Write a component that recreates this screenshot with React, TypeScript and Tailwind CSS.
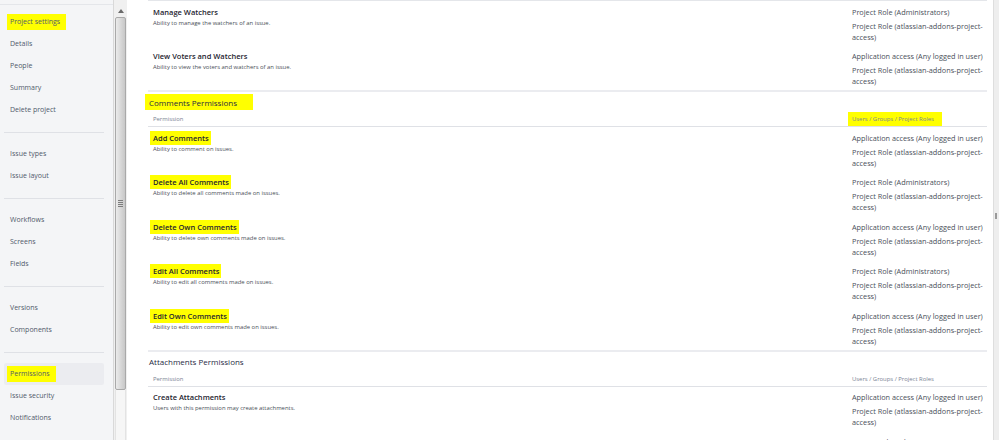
import React from "react";

const ADMIN = "Project Role (Administrators)";
const ANY = "Application access (Any logged in user)";

type RowData = { title: string; desc: string; first: string; hl?: boolean };

const watchers: RowData[] = [
  { title: "Manage Watchers", desc: "Ability to manage the watchers of an issue.", first: ADMIN },
  { title: "View Voters and Watchers", desc: "Ability to view the voters and watchers of an issue.", first: ANY },
];

const comments: RowData[] = [
  { title: "Add Comments", desc: "Ability to comment on issues.", first: ANY, hl: true },
  { title: "Delete All Comments", desc: "Ability to delete all comments made on issues.", first: ADMIN, hl: true },
  { title: "Delete Own Comments", desc: "Ability to delete own comments made on issues.", first: ANY, hl: true },
  { title: "Edit All Comments", desc: "Ability to edit all comments made on issues.", first: ADMIN, hl: true },
  { title: "Edit Own Comments", desc: "Ability to edit own comments made on issues.", first: ANY, hl: true },
];

const attachments: RowData[] = [
  { title: "Create Attachments", desc: "Users with this permission may create attachments.", first: ANY },
  { title: "Delete All Attachments", desc: "Users with this permission may delete all attachments.", first: ADMIN },
];

function Row({ r }: { r: RowData }) {
  return (
    <div className="flex h-[44.5px] pt-[5.5px]">
      <div className="flex-1 pl-[5px]">
        <div className="text-[7.5px] leading-[11px] font-semibold text-[#1e2430] whitespace-nowrap">
          {r.hl ? (
            <span className="bg-[#ffff00] py-[2px] pl-[3px] pr-[2px] -ml-[3px]">{r.title}</span>
          ) : (
            r.title
          )}
        </div>
        <div className="text-[5.9px] leading-[11px] text-[#4a4f58] whitespace-nowrap">{r.desc}</div>
      </div>
      <div className="w-[139px] pl-[4px] flex flex-col gap-[3px] text-[7.3px] leading-[11px] text-[#4a4f5a] whitespace-nowrap">
        <div>{r.first}</div>
        <div>
          Project Role (atlassian-addons-project-
          <br />
          access)
        </div>
      </div>
    </div>
  );
}

function SectionHead({ title, hl }: { title: string; hl?: boolean }) {
  return (
    <div className="border-t-2 border-[#ebecf0]">
      <div className="pt-[4px] pl-[1px] text-[8px] leading-[12px] font-medium text-[#1f2a44] whitespace-nowrap">
        {hl ? (
          <span className="bg-[#ffff00] py-[2.5px] pl-[4px] pr-[16px] -ml-[4px]">{title}</span>
        ) : (
          title
        )}
      </div>
      <div className="flex pt-[7px] pb-[3px] border-b border-[#dfe1e6] text-[5.9px] leading-[8px] text-[#7a8394]">
        <div className="flex-1 pl-[5px]">Permission</div>
        <div className="w-[139px] pl-[4px] whitespace-nowrap">
          {hl ? (
            <span className="bg-[#ffff00] py-[3px] pl-[4px] pr-[8px] -ml-[4px]">Users / Groups / Project Roles</span>
          ) : (
            "Users / Groups / Project Roles"
          )}
        </div>
      </div>
    </div>
  );
}

const groups: { label: string; hl?: boolean; active?: boolean }[][] = [
  [{ label: "Project settings", hl: true }, { label: "Details" }, { label: "People" }, { label: "Summary" }, { label: "Delete project" }],
  [{ label: "Issue types" }, { label: "Issue layout" }],
  [{ label: "Workflows" }, { label: "Screens" }, { label: "Fields" }],
  [{ label: "Versions" }, { label: "Components" }],
  [{ label: "Permissions", hl: true, active: true }, { label: "Issue security" }, { label: "Notifications" }],
];

function Sidebar() {
  return (
    <div className="w-[113px] h-full bg-[#f4f5f7] shrink-0">
      <div className="h-[4px]" />
      <div className="h-px bg-[#e4e6ea]" />
      <div className="h-[6px]" />
      <div className="pl-[4px] pr-[9px]">
        {groups.map((g, gi) => (
          <div key={gi}>
            {gi > 0 && (
              <div className="h-[22px] flex items-center">
                <div className="h-px w-full bg-[#dfe1e6]" />
              </div>
            )}
            {g.map((it) => (
              <div
                key={it.label}
                className={
                  "h-[22px] flex items-center pl-[6px] text-[7px] text-[#505a6b] whitespace-nowrap " +
                  (it.active ? "bg-[#ebecf0] rounded-[2px]" : "")
                }
              >
                {it.hl ? (
                  <span className="bg-[#ffff00] py-[3px] pl-[3px] pr-[6px] -ml-[3px]">{it.label}</span>
                ) : (
                  it.label
                )}
              </div>
            ))}
          </div>
        ))}
      </div>
    </div>
  );
}

function LeftScrollbar() {
  return (
    <div className="w-[14px] h-full shrink-0 bg-[#f0f0f0] border-l border-[#d9d9d9] flex flex-col items-center">
      <div className="h-[4px]" />
      <div className="h-[13px] flex items-center justify-center">
        <svg width="6" height="4" viewBox="0 0 6 4">
          <path d="M0 4 L3 0 L6 4 Z" fill="#6a6a6a" />
        </svg>
      </div>
      <div className="w-[11px] h-[373px] rounded-[2px] border border-[#a9a9a9] bg-[linear-gradient(to_right,#ebebeb,#d2d2d2_70%,#c8c8c8)] flex flex-col items-center justify-center gap-[1px]">
        <div className="h-px w-[5px] bg-[#7d7d7d]" />
        <div className="h-px w-[5px] bg-[#7d7d7d]" />
        <div className="h-px w-[5px] bg-[#7d7d7d]" />
        <div className="h-px w-[5px] bg-[#7d7d7d]" />
      </div>
      <div className="flex-1 w-[11px] bg-[#f6f6f6] border-x border-[#e3e3e3]" />
    </div>
  );
}

export default function App() {
  return (
    <div className="flex w-[999px] h-[440px] overflow-hidden bg-white font-['Open_Sans',sans-serif]">
      <Sidebar />
      <LeftScrollbar />
      <div className="flex-1 h-full bg-white">
        <div className="ml-[21px] mr-[6px]">
          <div className="border-t border-[#e4e6ea]">
            {watchers.map((r) => (
              <Row key={r.title} r={r} />
            ))}
          </div>
          <SectionHead title="Comments Permissions" hl />
          {comments.map((r) => (
            <Row key={r.title} r={r} />
          ))}
          <SectionHead title="Attachments Permissions" />
          {attachments.map((r) => (
            <Row key={r.title} r={r} />
          ))}
        </div>
      </div>
      <div className="w-[6px] h-full shrink-0 bg-[#eeeeee] border-l border-[#dedede] flex flex-col">
        <div className="h-[213px]" />
        <div className="h-[6px] w-[2px] ml-[1px] bg-[#9a9a9a]" />
      </div>
    </div>
  );
}
